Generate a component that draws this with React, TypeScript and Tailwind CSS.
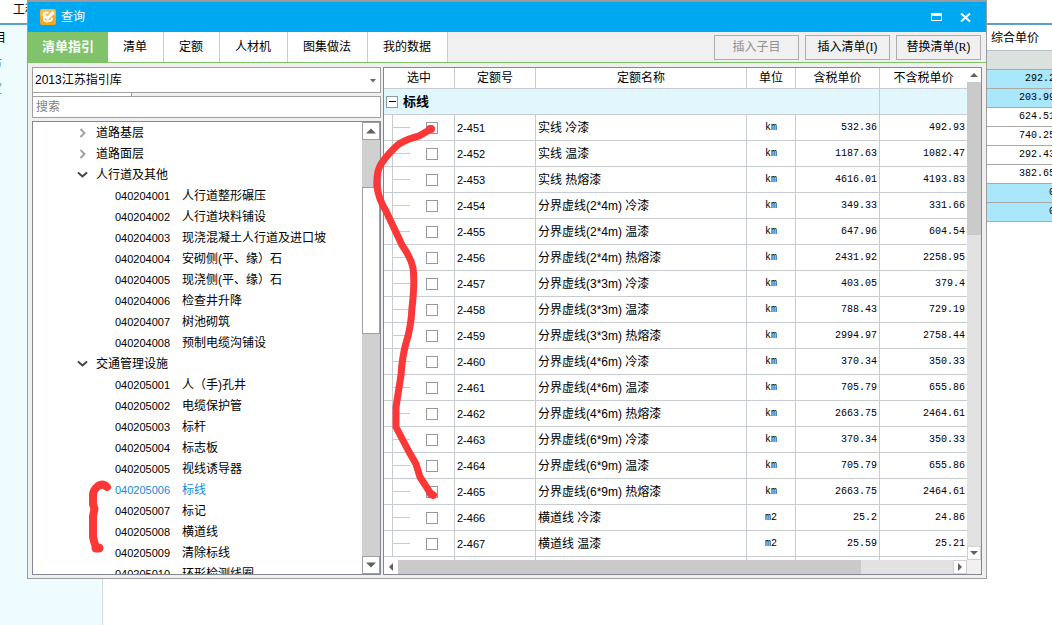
import React from "react";

type TreeRow =
  | { kind: "group"; label: string; open: boolean }
  | { kind: "item"; code: string; label: string; active?: boolean };

const tree: TreeRow[] = [
  { kind: "group", label: "道路基层", open: false },
  { kind: "group", label: "道路面层", open: false },
  { kind: "group", label: "人行道及其他", open: true },
  { kind: "item", code: "040204001", label: "人行道整形碾压" },
  { kind: "item", code: "040204002", label: "人行道块料铺设" },
  { kind: "item", code: "040204003", label: "现浇混凝土人行道及进口坡" },
  { kind: "item", code: "040204004", label: "安砌侧(平、缘）石" },
  { kind: "item", code: "040204005", label: "现浇侧(平、缘）石" },
  { kind: "item", code: "040204006", label: "检查井升降" },
  { kind: "item", code: "040204007", label: "树池砌筑" },
  { kind: "item", code: "040204008", label: "预制电缆沟铺设" },
  { kind: "group", label: "交通管理设施", open: true },
  { kind: "item", code: "040205001", label: "人（手)孔井" },
  { kind: "item", code: "040205002", label: "电缆保护管" },
  { kind: "item", code: "040205003", label: "标杆" },
  { kind: "item", code: "040205004", label: "标志板" },
  { kind: "item", code: "040205005", label: "视线诱导器" },
  { kind: "item", code: "040205006", label: "标线", active: true },
  { kind: "item", code: "040205007", label: "标记" },
  { kind: "item", code: "040205008", label: "横道线" },
  { kind: "item", code: "040205009", label: "清除标线" },
  { kind: "item", code: "040205010", label: "环形检测线圈" },
];

const quotas: [string, string, string, string, string][] = [
  ["2-451", "实线 冷漆", "km", "532.36", "492.93"],
  ["2-452", "实线 温漆", "km", "1187.63", "1082.47"],
  ["2-453", "实线 热熔漆", "km", "4616.01", "4193.83"],
  ["2-454", "分界虚线(2*4m) 冷漆", "km", "349.33", "331.66"],
  ["2-455", "分界虚线(2*4m) 温漆", "km", "647.96", "604.54"],
  ["2-456", "分界虚线(2*4m) 热熔漆", "km", "2431.92", "2258.95"],
  ["2-457", "分界虚线(3*3m) 冷漆", "km", "403.05", "379.4"],
  ["2-458", "分界虚线(3*3m) 温漆", "km", "788.43", "729.19"],
  ["2-459", "分界虚线(3*3m) 热熔漆", "km", "2994.97", "2758.44"],
  ["2-460", "分界虚线(4*6m) 冷漆", "km", "370.34", "350.33"],
  ["2-461", "分界虚线(4*6m) 温漆", "km", "705.79", "655.86"],
  ["2-462", "分界虚线(4*6m) 热熔漆", "km", "2663.75", "2464.61"],
  ["2-463", "分界虚线(6*9m) 冷漆", "km", "370.34", "350.33"],
  ["2-464", "分界虚线(6*9m) 温漆", "km", "705.79", "655.86"],
  ["2-465", "分界虚线(6*9m) 热熔漆", "km", "2663.75", "2464.61"],
  ["2-466", "横道线 冷漆", "m2", "25.2", "24.86"],
  ["2-467", "横道线 温漆", "m2", "25.59", "25.21"],
];

const backPrices = [
  { value: "292.2", marked: true },
  { value: "203.99", marked: true },
  { value: "624.51", marked: false },
  { value: "740.25", marked: false },
  { value: "292.43", marked: false },
  { value: "382.65", marked: false },
  { value: "0", marked: true },
  { value: "0", marked: true },
];

const tabs = ["清单", "定额", "人材机", "图集做法", "我的数据"];

const mono = "font-['Liberation_Mono','Noto_Sans_CJK_SC',monospace] text-[10px]";
const codeText = "font-['Liberation_Sans','Noto_Sans_CJK_SC',sans-serif] text-[11px]";

function Arrow({ dir, size }: { dir: "up" | "down" | "left" | "right"; size: number }) {
  const points = {
    up: "0,6 4,2 8,6",
    down: "0,2 4,6 8,2",
    left: "6,0 2,4 6,8",
    right: "2,0 6,4 2,8",
  }[dir];
  return (
    <svg width={size} height={size} viewBox="0 0 8 8" aria-hidden="true">
      <polygon points={points} fill="#606060" />
    </svg>
  );
}

function ScrollButton({
  dir,
  label,
  className,
  size = 8,
}: {
  dir: "up" | "down" | "left" | "right";
  label: string;
  className: string;
  size?: number;
}) {
  return (
    <button type="button" aria-label={label} className={`flex shrink-0 items-center justify-center bg-white ${className}`}>
      <Arrow dir={dir} size={size} />
    </button>
  );
}

function Backdrop() {
  return (
    <div className="flex min-h-screen justify-between">
      <div className="flex w-[103px] flex-col">
        <div className="flex h-[23px] items-center pb-1 pl-[13px]">工程</div>
        <div className="h-[2px] bg-[#5aa2cb]" />
        <div className="grow border-r border-[#d3dde0] bg-[#effcff]">
          <div className="-ml-[6px] flex h-[26px] items-center">目</div>
          <div className="-ml-[10px] flex h-[25px] items-center text-[#3f7ca8]">市</div>
          <div className="-ml-[10px] flex h-[25px] items-center text-[#4aa5cf]">定</div>
        </div>
      </div>
      <div className="-mr-[3px] w-[69px]">
        <div className="h-[23px]" />
        <div className="h-[2px] bg-[#5aa2cb]" />
        <table className="w-full border-separate border-spacing-0">
          <thead>
            <tr>
              <th className="h-[26px] border-b border-[#b9c4c8] p-0 pl-[5px] text-left font-normal">综合单价</th>
            </tr>
          </thead>
          <tbody>
            <tr>
              <td className="h-[19px] border-b border-[#a9a9a9] bg-[#dae2dd] p-0" />
            </tr>
            {backPrices.map((row, i) => (
              <tr key={i} className={row.marked ? "bg-[#abe7fa]" : "bg-white"}>
                <td className={`h-[19px] border-b border-[#a9a9a9] p-0 text-right ${mono}`}>{row.value}</td>
              </tr>
            ))}
          </tbody>
        </table>
      </div>
    </div>
  );
}

function TitleBar() {
  return (
    <header className="flex h-[31px] items-center border-t border-[#5bb3cf] bg-[#00a8f2] pr-[15px] pl-3 text-white">
      <svg width="16" height="16" viewBox="0 0 16 16" aria-hidden="true">
        <rect width="16" height="16" rx="2" fill="#f5a623" />
        <rect x="0.5" y="0.5" width="15" height="7" rx="2" fill="#f8bd52" />
        <path d="M3.5 5 Q6 2.5 8.5 4 M3.5 5 L4.2 11.5 Q8 14 12 10.5 L11.5 8.5" fill="none" stroke="#fff" strokeWidth="1.8" />
        <path d="M4.5 6.5 L7.5 9.5 L13.5 3" fill="none" stroke="#fff" strokeWidth="2.6" />
      </svg>
      <h1 className="ml-[5px] grow">查询</h1>
      <button type="button" aria-label="最大化" className="mr-[18px] h-[8px] w-[11px] border border-t-[3px] border-white" />
      <button type="button" aria-label="关闭">
        <svg width="11" height="9" viewBox="0 0 11 9" aria-hidden="true">
          <path d="M1 0.5 L10 8.5 M10 0.5 L1 8.5" stroke="#fff" strokeWidth="2" />
        </svg>
      </button>
    </header>
  );
}

function Toolbar() {
  const button = "h-[25px] w-[85px] border border-[#adadad] bg-[#f0f0f0]";
  return (
    <div className="flex h-[31px] items-stretch border-b border-[#7ec466] bg-[#f0f0f0]">
      <nav className="flex">
        <button type="button" className="w-20 bg-[#80c36b] text-[13px] font-bold text-white">
          清单指引
        </button>
        {tabs.map((t) => (
          <button type="button" key={t} className="border-r border-[#b5e0a4] bg-white px-[15px] pr-4">
            {t}
          </button>
        ))}
      </nav>
      <div className="ml-auto flex items-center gap-[6px] pr-[5px]">
        <button type="button" disabled className={`${button} text-[#8f8f8f]`}>
          插入子目
        </button>
        <button type="button" className={button}>
          插入清单(<span className="font-['Liberation_Serif',serif]">I</span>)
        </button>
        <button type="button" className={button}>
          替换清单(<span className="font-['Liberation_Serif',serif]">R</span>)
        </button>
      </div>
    </div>
  );
}

function TreeLine({ row }: { row: TreeRow }) {
  if (row.kind === "group") {
    return (
      <button type="button" className="flex h-[21px] items-center pl-[43px]">
        <svg width="12" height="10" viewBox="0 0 12 10" className="mr-2" aria-hidden="true">
          {row.open ? (
            <path d="M2 2.5 L6.5 6.5 L11 2.5" fill="none" stroke="#444" strokeWidth="2" />
          ) : (
            <path d="M4.5 1 L8.5 5 L4.5 9" fill="none" stroke="#a0a0a0" strokeWidth="1.9" />
          )}
        </svg>
        {row.label}
      </button>
    );
  }
  return (
    <button type="button" className={`flex h-[21px] items-center pl-[82px] ${row.active ? "text-[#1389dc]" : ""}`}>
      <span className={`w-[67px] text-left ${codeText}`}>{row.code}</span>
      {row.label}
    </button>
  );
}

function GuidePanel() {
  return (
    <div className="flex w-[349px] shrink-0 flex-col">
      <div className="relative">
        <select aria-label="指引库" className="block h-[26px] w-full appearance-none border border-[#a0a0a0] bg-white pl-[2px]">
          <option>2013江苏指引库</option>
        </select>
        <svg width="6" height="4" viewBox="0 0 6 4" className="pointer-events-none absolute top-3 right-[5px]" aria-hidden="true">
          <polygon points="0,0 6,0 3,3.5" fill="#666" />
        </svg>
      </div>
      <div className="h-[3px] w-[100px] border-x border-[#a0a0a0] bg-white" />
      <input
        type="text"
        aria-label="搜索"
        placeholder="搜索"
        className="h-[22px] w-full border border-[#a0a0a0] bg-white pl-[3px] placeholder:text-[#808080]"
      />
      <div className="mt-[3px] flex h-0 grow overflow-hidden border border-[#828790] bg-white">
        <ul className="min-w-0 grow">
          {tree.map((row) => (
            <li key={row.kind === "item" ? row.code : row.label}>
              <TreeLine row={row} />
            </li>
          ))}
        </ul>
        <div className="flex w-[18px] shrink-0 flex-col bg-[#d0d0d0]">
          <ScrollButton dir="up" label="向上" size={10} className="h-[18px] w-full border border-[#a0a0a0]" />
          <div className="mt-[47px] h-[147px] border border-[#a0a0a0] bg-white" />
          <ScrollButton dir="down" label="向下" size={10} className="mt-auto h-[18px] w-full border border-[#a0a0a0]" />
        </div>
      </div>
    </div>
  );
}

function QuotaTable() {
  const head = "h-[21px] border-r border-b border-[#c8ccd0] p-0 font-normal";
  const cell = "h-[26px] border-r border-b border-[#c8ccd0] p-0";
  return (
    <table className="w-full table-fixed border-separate border-spacing-0 bg-white">
      <colgroup>
        <col className="w-[71px]" />
        <col className="w-[81px]" />
        <col />
        <col className="w-[49px]" />
        <col className="w-[84px]" />
        <col className="w-[87px]" />
      </colgroup>
      <thead>
        <tr>
          <th className={head}>选中</th>
          <th className={head}>定额号</th>
          <th className={head}>定额名称</th>
          <th className={head}>单位</th>
          <th className={head}>含税单价</th>
          <th className="h-[21px] border-b border-[#c8ccd0] p-0 font-normal">不含税单价</th>
        </tr>
      </thead>
      <tbody>
        <tr className="bg-[#e2f6fe]">
          <td colSpan={5} className={cell}>
            <div className="flex items-center pl-[2px]">
              <button type="button" aria-label="折叠" className="flex h-3 w-3 items-center justify-center border border-[#8a9aa5] bg-white">
                <span className="h-px w-[7px] bg-black" />
              </button>
              <span className="ml-[5px] text-[13px] leading-4 font-bold">标线</span>
            </div>
          </td>
          <td className="border-b border-[#c8ccd0] p-0" />
        </tr>
        {quotas.map(([code, name, unit, taxed, untaxed]) => (
          <tr key={code}>
            <td className={cell}>
              <div className="flex h-[25px] items-center pl-2">
                <span className="h-full w-px bg-[#c8ccd0]" />
                <span className="h-px w-[17px] bg-[#c8ccd0]" />
                <input
                  type="checkbox"
                  aria-label={code}
                  className="ml-4 h-3 w-3 appearance-none border border-[#999] bg-white checked:bg-[#1389dc]"
                />
              </div>
            </td>
            <td className={`${cell} pl-[2px] ${codeText}`}>{code}</td>
            <td className={`${cell} truncate pl-[2px]`}>{name}</td>
            <td className={`${cell} text-center ${mono}`}>{unit}</td>
            <td className={`${cell} pr-[2px] text-right ${mono}`}>{taxed}</td>
            <td className={`h-[26px] border-b border-[#c8ccd0] p-0 pr-[2px] text-right ${mono}`}>{untaxed}</td>
          </tr>
        ))}
        <tr>
          <td className="h-[3px] border-r border-[#c8ccd0] p-0" />
          <td className="border-r border-[#c8ccd0] p-0" />
          <td className="border-r border-[#c8ccd0] p-0" />
          <td className="border-r border-[#c8ccd0] p-0" />
          <td className="border-r border-[#c8ccd0] p-0" />
          <td className="p-0" />
        </tr>
      </tbody>
    </table>
  );
}

function QuotaPanel() {
  return (
    <div className="min-w-0 grow border border-[#828790] bg-white">
      <div className="flex">
        <div className="min-w-0 grow">
          <QuotaTable />
        </div>
        <div className="flex w-[14px] shrink-0 flex-col bg-[#e2e2e2]">
          <ScrollButton dir="up" label="表格向上" className="h-[14px] w-full" />
          <div className="h-[153px] bg-[#cacaca]" />
          <ScrollButton dir="down" label="表格向下" className="mt-auto h-[14px] w-full border border-[#d0d0d0]" />
        </div>
      </div>
      <div className="flex h-[14px] bg-[#f0f0f0]">
        <div className="flex grow bg-[#e2e2e2]">
          <ScrollButton dir="left" label="向左" className="w-[14px]" />
          <div className="w-[463px] bg-[#cacaca]" />
          <ScrollButton dir="right" label="向右" className="ml-auto w-[14px] border border-[#d0d0d0]" />
        </div>
        <div className="w-[14px]" />
      </div>
    </div>
  );
}

function Annotations() {
  return (
    <svg
      width="1052"
      height="625"
      viewBox="0 0 1052 625"
      className="pointer-events-none absolute top-0 left-0"
      fill="none"
      stroke="#fb3737"
      strokeLinecap="round"
      strokeLinejoin="round"
      aria-hidden="true"
    >
      <path
        strokeWidth="7"
        d="M431 129 L419 136 Q407 139 399 144 Q390 151 381 164 Q376 172 377 187 Q379 200 386 211 L402 245 Q411 258 413 268 Q415 282 412 308 Q411 328 406 343 Q402 358 401 375 L396 407 L396 427 L408 450 L416 464 L420 477 L431 494"
      />
      <path strokeWidth="8" d="M430 129 L431 129 M431 494 L433 495" />
      <path strokeWidth="8" d="M107 487 Q103 483 98 486 Q93 490 93 495 L93 504 L94.5 509 L93 516 L93 537 Q94 542 96 547 L99 548" />
      <path strokeWidth="9" d="M96 548 L99 548" />
    </svg>
  );
}

export default function App() {
  return (
    <div className="relative min-h-screen overflow-hidden bg-white font-['Liberation_Sans','Noto_Sans_CJK_SC',sans-serif] text-xs leading-4 text-black">
      <Backdrop />
      <section className="absolute top-0 right-[65px] left-[27px] border border-[#9c9c9c] bg-[#f0f0f0]">
        <TitleBar />
        <Toolbar />
        <div className="flex gap-[2px] px-1 pt-1 pb-[3px]">
          <GuidePanel />
          <QuotaPanel />
        </div>
      </section>
      <Annotations />
    </div>
  );
}
